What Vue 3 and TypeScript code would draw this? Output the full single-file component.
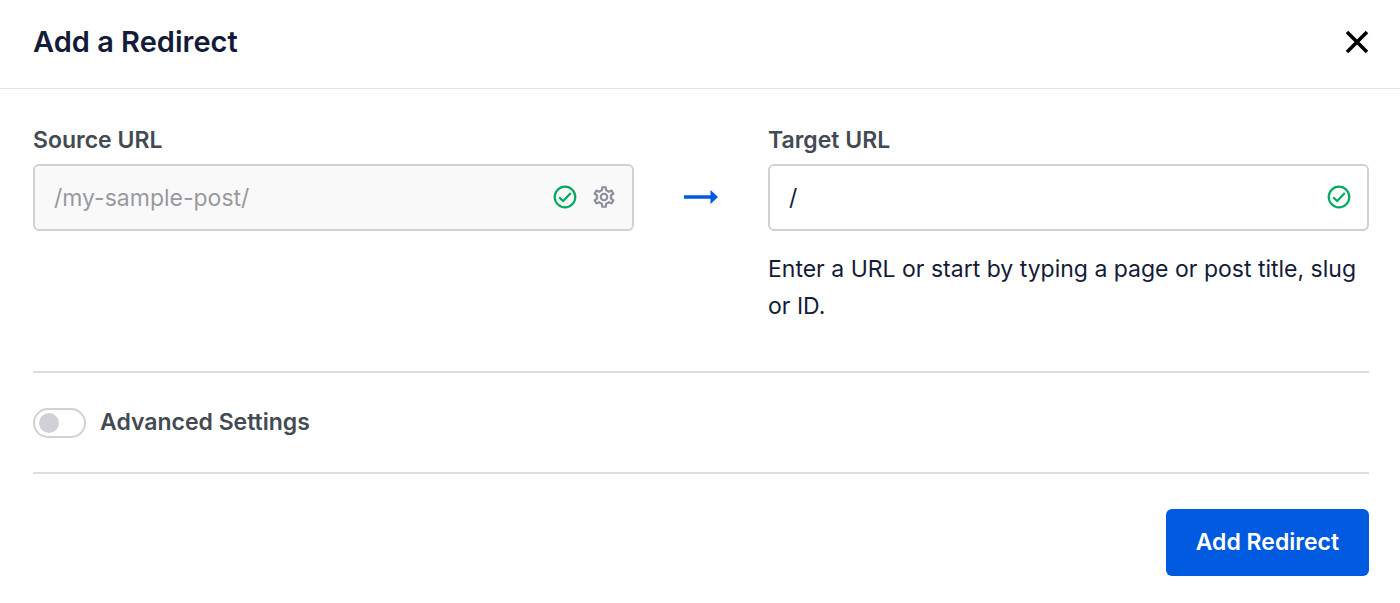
<script setup lang="ts">
import { ref } from 'vue'

const sourceUrl = ref<string>('')
const targetUrl = ref<string>('/')
const advanced = ref<boolean>(false)
</script>

<template>
  <section class="modal" role="dialog" aria-labelledby="modal-title">
    <header class="modal-header">
      <h1 id="modal-title">Add a Redirect</h1>
      <button class="icon-button close" type="button" aria-label="Close">
        <svg viewBox="0 0 24 24" width="24" height="24" aria-hidden="true">
          <path d="M2 2L22 22M22 2L2 22" fill="none" stroke="currentColor" stroke-width="3.6" />
        </svg>
      </button>
    </header>

    <form class="modal-body" @submit.prevent>
      <div class="urls">
        <div class="field">
          <label for="source-url">Source URL</label>
          <div class="control disabled">
            <input id="source-url" v-model="sourceUrl" type="text" placeholder="/my-sample-post/" disabled />
            <svg class="check" viewBox="0 0 24 24" width="24" height="24" aria-hidden="true">
              <circle cx="12" cy="12" r="10.3" />
              <path d="M6.2 12.4L10.2 16L17.8 8" />
            </svg>
            <button class="icon-button gear" type="button" aria-label="Source URL options">
              <svg viewBox="0 0 24 24" width="26" height="26" aria-hidden="true">
                <path fill="currentColor" d="M19.43 12.98c.04-.32.07-.64.07-.98 0-.34-.03-.66-.07-.98l2.11-1.65c.19-.15.24-.42.12-.64l-2-3.46c-.09-.16-.26-.25-.44-.25-.06 0-.12.01-.17.03l-2.49 1c-.52-.4-1.08-.73-1.69-.98l-.38-2.65C14.46 2.18 14.25 2 14 2h-4c-.25 0-.46.18-.49.42l-.38 2.65c-.61.25-1.17.59-1.69.98l-2.49-1c-.06-.02-.12-.03-.18-.03-.17 0-.34.09-.43.25l-2 3.46c-.13.22-.07.49.12.64l2.11 1.65c-.04.32-.07.65-.07.98 0 .33.03.66.07.98l-2.11 1.65c-.19.15-.24.42-.12.64l2 3.46c.09.16.26.25.44.25.06 0 .12-.01.17-.03l2.49-1c.52.4 1.08.73 1.69.98l.38 2.65c.03.24.24.42.49.42h4c.25 0 .46-.18.49-.42l.38-2.65c.61-.25 1.17-.59 1.69-.98l2.49 1c.06.02.12.03.18.03.17 0 .34-.09.43-.25l2-3.46c.12-.22.07-.49-.12-.64l-2.11-1.65zm-1.98-1.71c.04.31.05.52.05.73 0 .21-.02.43-.05.73l-.14 1.13.89.7 1.08.84-.7 1.21-1.27-.51-1.04-.42-.9.68c-.43.32-.84.56-1.25.73l-1.06.43-.16 1.13-.2 1.35h-1.4l-.19-1.35-.16-1.13-1.06-.43c-.43-.18-.83-.41-1.23-.71l-.91-.7-1.06.43-1.27.51-.7-1.21 1.08-.84.89-.7-.14-1.13c-.03-.31-.05-.54-.05-.74s.02-.43.05-.73l.14-1.13-.89-.7-1.08-.84.7-1.21 1.27.51 1.04.42.9-.68c.43-.32.84-.56 1.25-.73l1.06-.43.16-1.13.2-1.35h1.39l.19 1.35.16 1.13 1.06.43c.43.18.83.41 1.23.71l.91.7 1.06-.43 1.27-.51.7 1.21-1.07.85-.89.7.14 1.13zM12 8c-2.21 0-4 1.79-4 4s1.79 4 4 4 4-1.79 4-4-1.79-4-4-4zm0 6c-1.1 0-2-.9-2-2s.9-2 2-2 2 .9 2 2-.9 2-2 2z" />
              </svg>
            </button>
          </div>
        </div>

        <div class="arrow">
          <svg viewBox="0 0 34 14" width="34" height="14" aria-hidden="true">
            <path fill="currentColor" d="M0 5.2H26.5V0L34 7L26.5 14V8.8H0Z" />
          </svg>
        </div>

        <div class="field">
          <label for="target-url">Target URL</label>
          <div class="control">
            <input id="target-url" v-model="targetUrl" type="text" aria-describedby="target-help" />
            <svg class="check" viewBox="0 0 24 24" width="24" height="24" aria-hidden="true">
              <circle cx="12" cy="12" r="10.3" />
              <path d="M6.2 12.4L10.2 16L17.8 8" />
            </svg>
          </div>
          <p id="target-help">Enter a URL or start by typing a page or post title, slug or ID.</p>
        </div>
      </div>

      <div class="advanced">
        <label class="toggle">
          <input v-model="advanced" type="checkbox" role="switch" />
          <span>Advanced Settings</span>
        </label>
      </div>

      <footer class="actions">
        <button class="primary" type="submit">Add Redirect</button>
      </footer>
    </form>
  </section>
</template>

<style>
body {
  margin: 0;
  background: #fff;
}
</style>

<style scoped>
.modal {
  color: #141b38;
  font-family: Inter, "Liberation Sans", sans-serif;
  font-size: 23px;
  line-height: 37px;
}

.modal-header {
  display: flex;
  align-items: center;
  justify-content: space-between;
  height: 84px;
  padding: 0 31px 4px 33px;
  border-bottom: 1px solid #e2e3e9;
}

h1 {
  margin: 0;
  font-size: 29px;
  font-weight: 600;
  line-height: 40px;
}

.icon-button {
  display: flex;
  padding: 0;
  border: 0;
  background: none;
  cursor: pointer;
}

.close {
  color: #000;
}

.modal-body {
  padding: 33px 31px 28px 33px;
}

.urls {
  display: grid;
  grid-template-columns: minmax(0, 1fr) 134px minmax(0, 1fr);
  padding-bottom: 46px;
}

.field label {
  display: block;
  margin-bottom: 5px;
  color: #434a54;
  font-weight: 600;
}

.control {
  display: flex;
  align-items: center;
  gap: 14px;
  box-sizing: border-box;
  height: 67px;
  padding: 0 16px 1px 19px;
  border: 2px solid #d0d1d7;
  border-radius: 6px;
  background: #fff;
}

.control.disabled {
  background: #f9f9f9;
}

.control input {
  flex: 1;
  min-width: 0;
  padding: 3px 0 0;
  border: 0;
  outline: 0;
  background: none;
  color: #141b38;
  font: inherit;
}

.control input::placeholder {
  color: #98999f;
  opacity: 1;
}

.check {
  fill: none;
  stroke: #00aa63;
  stroke-width: 2.2;
}

.gear {
  color: #8c8f9a;
}

.disabled {
  padding-right: 15px;
}

.arrow {
  display: flex;
  align-items: center;
  justify-content: center;
  height: 65px;
  margin-top: 42px;
  color: #005ae0;
}

p {
  margin: 20px 0 0;
}

.advanced {
  padding: 31px 0;
  border-top: 2px solid #dcdddf;
  border-bottom: 2px solid #dcdddf;
}

.toggle {
  display: flex;
  align-items: center;
  gap: 14px;
  width: fit-content;
  color: #434a54;
  font-weight: 600;
  cursor: pointer;
}

.toggle input {
  display: flex;
  align-items: center;
  box-sizing: border-box;
  width: 53px;
  height: 30px;
  margin: 0;
  padding: 0 4px;
  appearance: none;
  border: 2px solid #d0d1d7;
  border-radius: 15px;
  background: #fff;
}

.toggle input::before {
  width: 20px;
  height: 20px;
  border-radius: 50%;
  background: #d0d1d7;
  content: "";
}

.toggle input:checked {
  justify-content: flex-end;
  border-color: #005ae0;
}

.toggle input:checked::before {
  background: #005ae0;
}

.actions {
  display: flex;
  justify-content: flex-end;
  padding-top: 35px;
}

.primary {
  height: 67px;
  padding: 0 30px;
  border: 0;
  border-radius: 6px;
  background: #005ae0;
  color: #fff;
  font: inherit;
  font-weight: 600;
  cursor: pointer;
}
</style>
